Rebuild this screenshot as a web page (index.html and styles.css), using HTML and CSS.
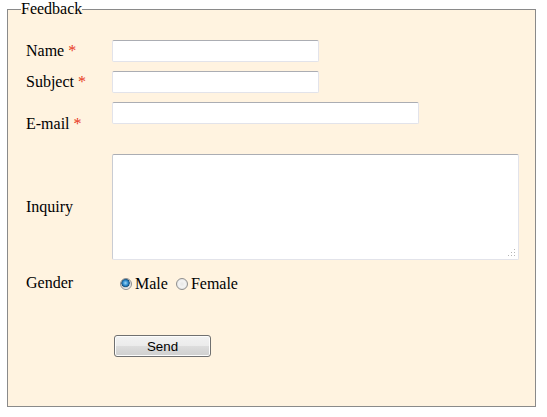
FILE: index.html
```html
<!DOCTYPE html>
<html>
<head>
<meta charset="utf-8">
<link rel="stylesheet" href="styles.css">
</head>
<body>
<form class="form">
  <fieldset class="box">
    <legend class="legend">Feedback</legend>
    <div class="row">
      <label class="label">Name <span class="req">*</span></label>
      <input class="field short" type="text">
    </div>
    <div class="row">
      <label class="label">Subject <span class="req">*</span></label>
      <input class="field short" type="text">
    </div>
    <div class="row row-email">
      <label class="label">E-mail <span class="req">*</span></label>
      <input class="field medium top" type="text">
    </div>
    <div class="row row-inquiry">
      <label class="label">Inquiry</label>
      <div class="area-wrap">
        <textarea class="area"></textarea>
        <svg class="grip" width="9" height="9" viewBox="0 0 9 9">
          <rect x="7" y="1" width="1" height="1" fill="#b5b5b5"/>
          <rect x="7" y="4" width="1" height="1" fill="#b5b5b5"/>
          <rect x="4" y="4" width="1" height="1" fill="#b5b5b5"/>
          <rect x="7" y="7" width="1" height="1" fill="#b5b5b5"/>
          <rect x="4" y="7" width="1" height="1" fill="#b5b5b5"/>
          <rect x="1" y="7" width="1" height="1" fill="#b5b5b5"/>
        </svg>
      </div>
    </div>
    <div class="row row-gender">
      <label class="label">Gender</label>
      <div class="radios">
        <label class="opt"><input class="radio" type="radio" name="g" checked> Male</label>
        <label class="opt"><input class="radio" type="radio" name="g"> Female</label>
      </div>
    </div>
    <div class="row row-send">
      <span class="label"></span>
      <button class="btn" type="button">Send</button>
    </div>
  </fieldset>
</form>
</body>
</html>
```

FILE: styles.css
```css
html, body {
  margin: 0;
  padding: 0;
  background: #ffffff;
}
body {
  font-family: "Liberation Serif", "Times New Roman", serif;
  font-size: 16px;
  color: #000;
}
.form {
  margin: 0;
  padding: 0;
}
.box {
  margin: 0 11px 0 7px;
  border: 1px solid #8a8a8a;
  background: #fff3e0;
  padding: 22px 0 49px 18px;
  min-width: 0;
}
.legend {
  padding: 0;
  margin-left: -5px;
  line-height: 18px;
}
.row {
  display: flex;
  align-items: center;
  margin-bottom: 9px;
}
.label {
  width: 86px;
  flex: none;
  line-height: 18px;
}
.req {
  color: #e8361a;
}
.field {
  box-sizing: border-box;
  height: 22px;
  margin: 0;
  padding: 2px 3px;
  border: 1px solid #e2e3ea;
  border-top-color: #abadb3;
  border-radius: 2px;
  background: #fff;
  font: 13px "Liberation Sans", Arial, sans-serif;
  outline: none;
}
.short { width: 207px; }
.medium { width: 307px; }
.row-email {
  height: 41px;
  margin-bottom: 11px;
}
.row-email .label {
  padding-top: 2px;
}
.top { align-self: flex-start; }
.row-inquiry {
  margin-bottom: 10px;
}
.area-wrap {
  position: relative;
  width: 407px;
  height: 106px;
}
.area {
  box-sizing: border-box;
  display: block;
  width: 407px;
  height: 106px;
  margin: 0;
  border: 1px solid #e2e3ea;
  border-top-color: #abadb3;
  border-left-color: #c9ccd3;
  border-radius: 2px;
  background: #fff;
  resize: none;
  outline: none;
}
.grip {
  position: absolute;
  right: 3px;
  bottom: 3px;
}
.row-gender {
  height: 26px;
  margin-bottom: 39px;
}
.radios {
  display: flex;
  align-items: center;
  padding-left: 8px;
  line-height: 18px;
  padding-top: 2px;
}
.opt {
  display: flex;
  align-items: center;
  margin-right: 8px;
}
.radio {
  -webkit-appearance: none;
  appearance: none;
  box-sizing: border-box;
  width: 12px;
  height: 12px;
  margin: 0 3px 0 0;
  border: 1px solid #8f8f8f;
  border-radius: 50%;
  background: radial-gradient(circle at 50% 50%, #e6e6e6 0%, #f4f4f4 45%, #d6d6d6 100%);
  position: relative;
}
.radio:checked {
  background:
    radial-gradient(circle at 45% 40%, #9fd8f6 0%, #2f8ccf 30%, #14507e 48%, #c7c7c7 54%, #f2f2f2 70%, #dcdcdc 100%);
}
.row-send {
  margin-bottom: 0;
}
.btn {
  box-sizing: border-box;
  width: 97px;
  height: 22px;
  margin: 0 0 0 2px;
  padding: 0;
  border: 1px solid #707070;
  border-radius: 3px;
  background: linear-gradient(#f2f2f2 0%, #ebebeb 50%, #dddddd 50%, #cfcfcf 100%);
  font: 13.33px "Liberation Sans", Arial, sans-serif;
  color: #000;
  box-shadow: inset 0 0 0 1px #fcfcfc;
}
```
